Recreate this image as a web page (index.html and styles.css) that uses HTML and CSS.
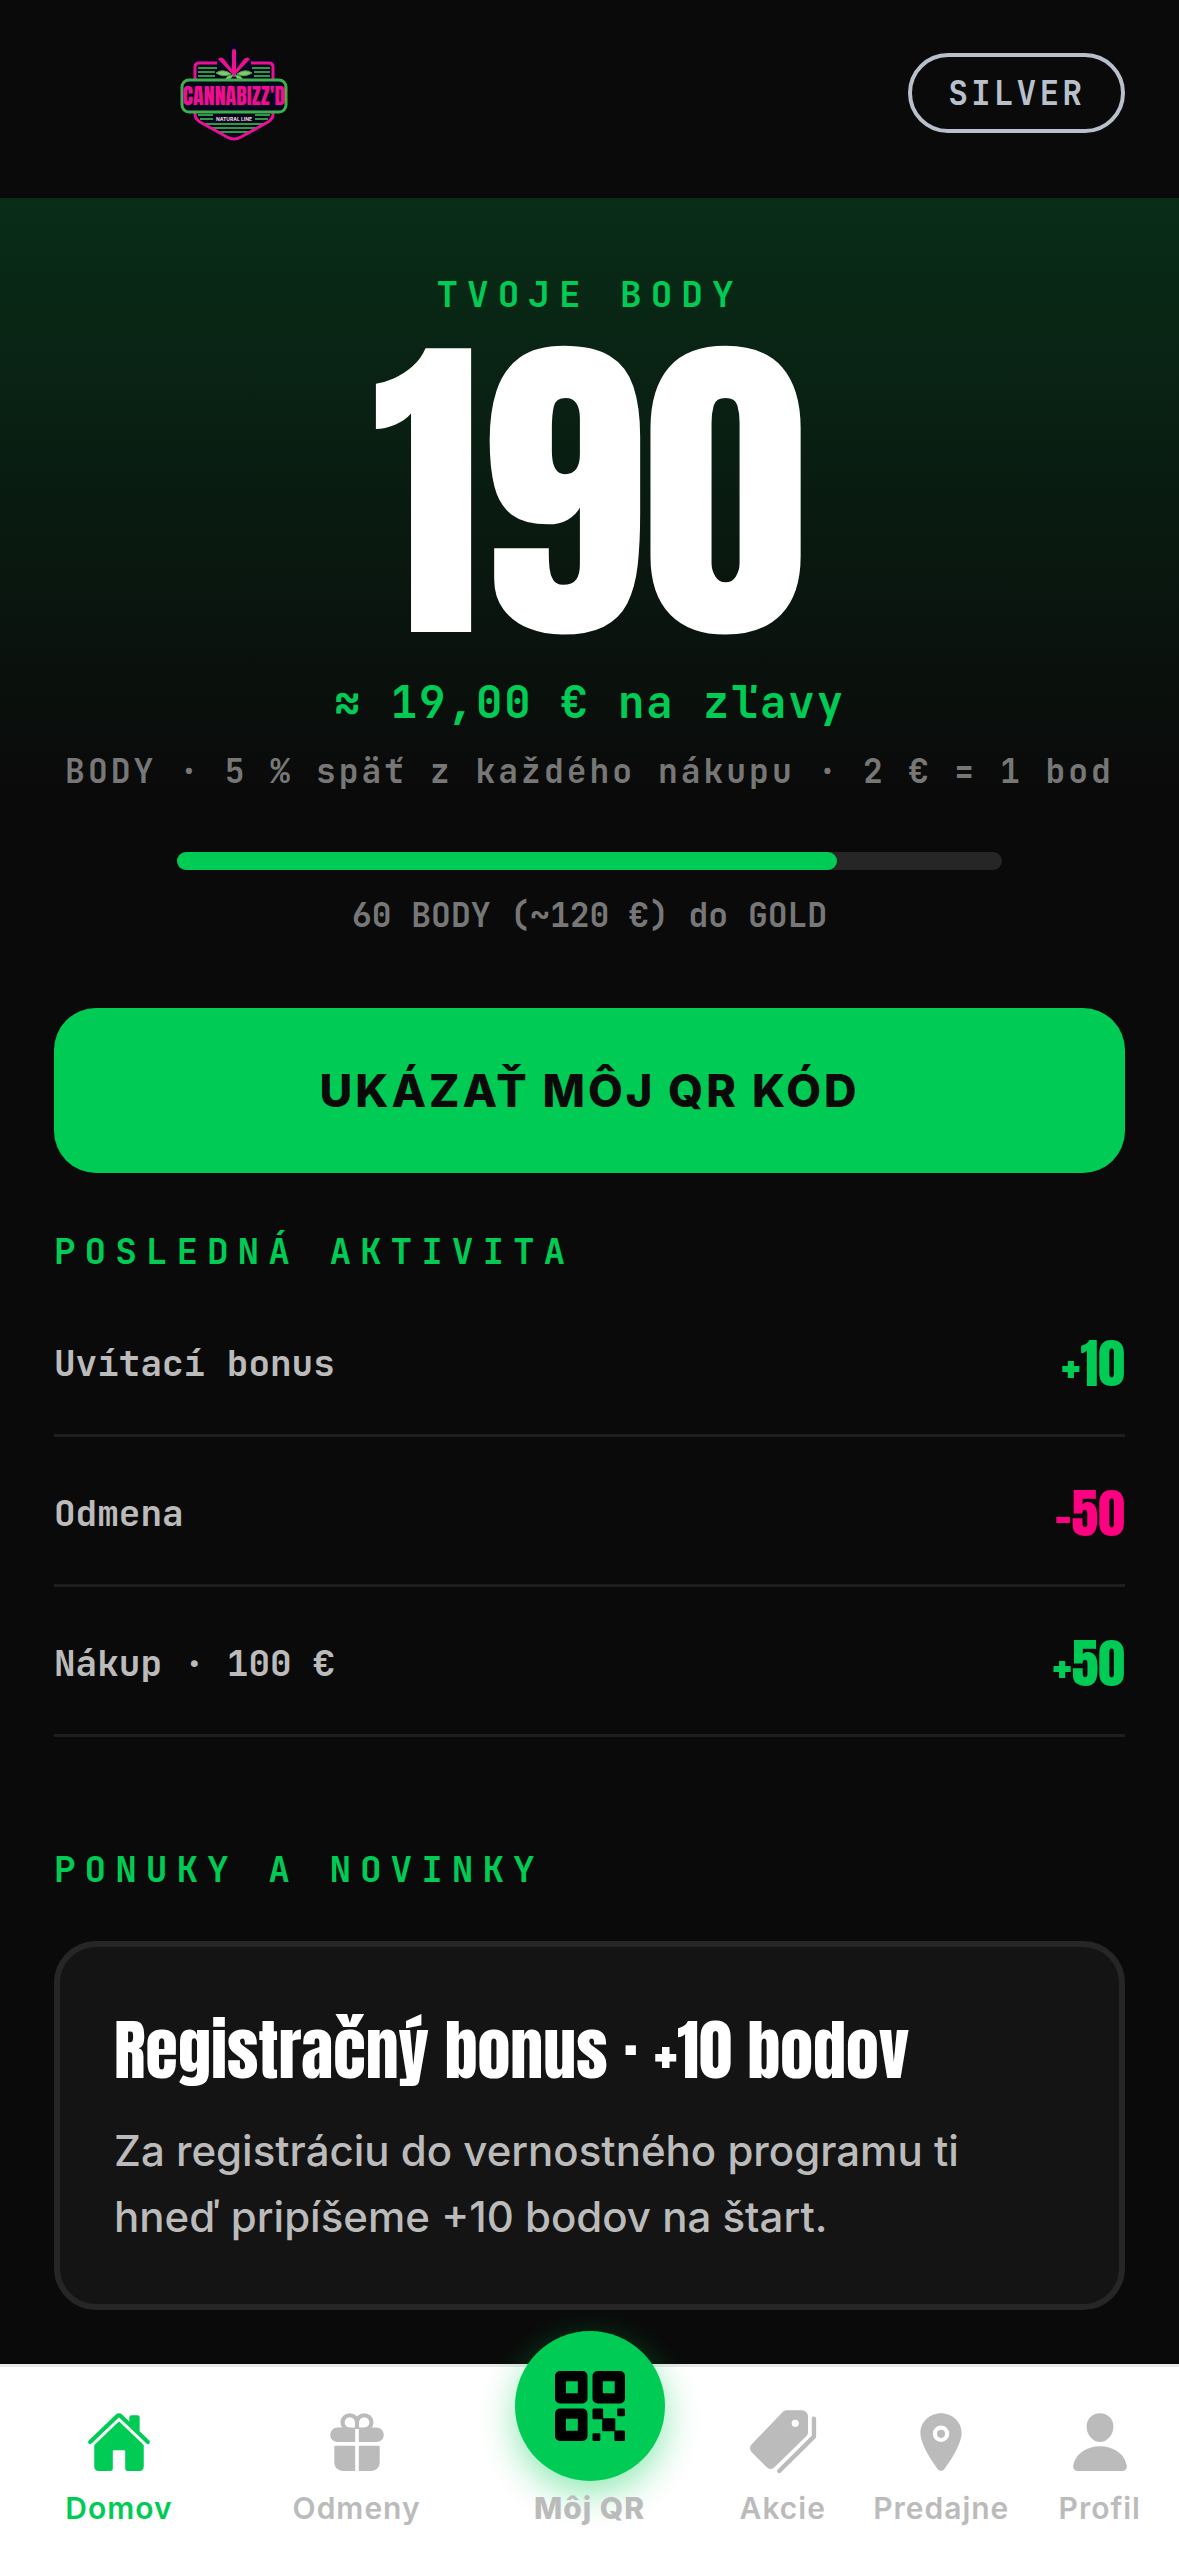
FILE: index.html
```html
<!DOCTYPE html>
<html lang="sk">
<head>
<meta charset="utf-8">
<meta name="viewport" content="width=device-width, initial-scale=1">
<title>Cannabizz'd – Domov</title>
<link rel="stylesheet" href="styles.css">
</head>
<body>
<header class="topbar">
  <div class="brand">
    <svg class="logo" viewBox="0 0 114 104" role="img" aria-label="Cannabizz'd Natural Line">
      <g fill="none" stroke="#06061c" stroke-width="7" stroke-linejoin="round">
        <path d="M18 31V27q0-4 4-4h70q4 0 4 4v46q0 5-5 8L64 96q-7 4-14 0L23 81q-5-3-5-8z" fill="#06061c"/>
        <path d="M57 35C52 24 53 14 57 6q5 10 0 29M57 35Q42 30 40 18M57 35q15-5 17-17"/>
      </g>
      <g fill="none" stroke="#2f9a46" stroke-width="2">
        <path d="M21 28h19M21 32h17M21 36h17M75 28h18M77 32h16M77 36h16"/>
        <path d="M21 75h15M23 79h13M25 84h64M33 88h48M40 92h34M78 75h15M78 79h13"/>
      </g>
      <path d="M18 40V27q0-4 4-4h18M74 23h18q4 0 4 4v13M18 72v2q0 5 5 8l27 15q7 4 14 0l27-15q5-3 5-8v-2" fill="none" stroke="#ec1090" stroke-width="3"/>
      <path d="M57 36L41 19q3-3 6 0l10 13 10-13q3-3 6 0z" fill="#ec1090"/>
      <path d="M57 35V11" stroke="#ec1090" stroke-width="4" stroke-linecap="round"/>
      <path d="M54 34q-8-6-15-1 8 5 15 1M60 34q8-6 15-1-8 5-15 1M56 35q-6 0-8 5 6 0 8-5M58 35q6 0 8 5-6 0-8-5" fill="#8dc26f" stroke="#3fae4b"/>
      <rect x="5" y="40" width="104" height="32" rx="7" fill="#06061c" stroke="#3fae4b" stroke-width="3"/>
      <text class="logo-name" x="57" y="65" text-anchor="middle">CANNABIZZ'D</text>
      <rect x="38" y="74" width="38" height="9" fill="#06061c"/>
      <text class="logo-line" x="57" y="81" text-anchor="middle">NATURAL LINE</text>
    </svg>
  </div>
  <span class="tier">SILVER</span>
</header>

<main class="content">
  <section class="hero">
    <h1 class="label">TVOJE BODY</h1>
    <p class="points">190</p>
    <p class="worth">≈ 19,00 € na zľavy</p>
    <p class="rate">BODY · 5 % späť z každého nákupu · 2 € = 1 bod</p>
    <div class="progress" role="progressbar" aria-valuenow="80" aria-valuemin="0" aria-valuemax="100" aria-labelledby="next-tier">
      <div class="progress-fill" style="width: 80%"></div>
    </div>
    <p class="next-tier" id="next-tier">60 BODY (~120 €) do GOLD</p>
  </section>

  <div class="sections">
    <button class="cta" type="button">UKÁZAŤ MÔJ QR KÓD</button>

    <section class="activity">
      <h2 class="label">POSLEDNÁ AKTIVITA</h2>
      <ul class="rows">
        <li class="row"><span>Uvítací bonus</span><span class="amount">+10</span></li>
        <li class="row"><span>Odmena</span><span class="amount amount-minus">-50</span></li>
        <li class="row"><span>Nákup · 100 €</span><span class="amount">+50</span></li>
      </ul>
    </section>

    <section class="news">
      <h2 class="label">PONUKY A NOVINKY</h2>
      <article class="card">
        <h3 class="card-title">Registračný bonus · +10 bodov</h3>
        <p class="card-text">Za registráciu do vernostného programu ti hneď pripíšeme +10 bodov na štart.</p>
      </article>
    </section>
  </div>
</main>

<nav class="tabbar" aria-label="Hlavná navigácia">
  <div class="tabs">
    <a class="tab tab-active" href="#domov" aria-current="page">
      <svg class="icon" viewBox="0 0 512 512" aria-hidden="true"><path d="M261.560 101.280a8 8 0 00-11.060 0L66.400 277.150a8 8 0 00-2.470 5.790L63.900 448a32 32 0 0032 32H192a16 16 0 0016-16V328a8 8 0 018-8h80a8 8 0 018 8v136a16 16 0 0016 16h96.060a32 32 0 0032-32V282.940a8 8 0 00-2.470-5.790z"/><path d="M490.910 244.150l-74.800-71.560V64a16 16 0 00-16-16h-48a16 16 0 00-16 16v32l-57.920-55.380C272.770 35.140 264.710 32 256 32c-8.680 0-16.720 3.140-22.140 8.630l-212.700 203.500c-6.220 6-7 15.870-1.340 22.370A16 16 0 0043 267.560L250.500 69.280a8 8 0 0111.060 0l207.520 198.280a16 16 0 0022.590-.44c6.140-6.360 5.630-16.860-.76-22.970z"/></svg>
      <span>Domov</span>
    </a>
    <a class="tab" href="#odmeny">
      <svg class="icon" viewBox="0 0 512 512" aria-hidden="true"><path d="M256 156v-52a56 56 0 10-56 56M256 104a56 56 0 1156 56" fill="none" stroke="currentColor" stroke-width="32"/><path d="M242 144v112H104a56 56 0 010-112zM270 144v112h138a56 56 0 000-112zM242 286v194H144a64 64 0 01-64-64V294q0-8 8-8zM270 286v194h98a64 64 0 0064-64V294q0-8-8-8z"/></svg>
      <span>Odmeny</span>
    </a>
  </div>
  <a class="tab tab-qr" href="#qr">
    <span class="fab">
      <svg class="icon-qr" viewBox="0 0 512 512" aria-hidden="true"><path fill-rule="evenodd" d="M64 32h144a32 32 0 0132 32v144a32 32 0 01-32 32H64a32 32 0 01-32-32V64a32 32 0 0132-32zm38 66v76h76V98zM304 32h144a32 32 0 0132 32v144a32 32 0 01-32 32H304a32 32 0 01-32-32V64a32 32 0 0132-32zm34 66v76h76V98zM64 272h144a32 32 0 0132 32v144a32 32 0 01-32 32H64a32 32 0 01-32-32V304a32 32 0 0132-32zm38 66v76h76v-76z"/><rect x="272" y="272" width="68" height="68" rx="8"/><rect x="334" y="334" width="84" height="84" rx="8"/><rect x="430" y="272" width="50" height="50" rx="8"/><rect x="272" y="430" width="50" height="50" rx="8"/><rect x="412" y="412" width="68" height="68" rx="8"/></svg>
    </span>
    <span>Môj QR</span>
  </a>
  <div class="tabs">
    <a class="tab" href="#akcie">
      <svg class="icon" viewBox="0 0 512 512" aria-hidden="true"><path fill-rule="evenodd" d="M288 10h115a47 47 0 0147 47v123c0 12-4 22-12 30L190 452a42 42 0 01-60 0L13 335a44 44 0 010-62L256 22c9-8 20-12 32-12zm63 73a28 28 0 100 56 28 28 0 100-56z"/><path d="M496 75v139L227 481" fill="none" stroke="currentColor" stroke-width="34" stroke-linecap="round" stroke-linejoin="round"/></svg>
      <span>Akcie</span>
    </a>
    <a class="tab" href="#predajne">
      <svg class="icon" viewBox="0 0 512 512" aria-hidden="true"><circle cx="256" cy="192" r="32"/><path d="M256 32c-88.220 0-160 68.650-160 153 0 40.170 18.310 93.590 54.420 158.780 29 52.340 62.550 99.670 80 123.220a31.750 31.750 0 0051.220 0c17.420-23.550 51-70.880 80-123.220C397.690 278.610 416 225.190 416 185c0-84.350-71.780-153-160-153zm0 224a64 64 0 1164-64 64.070 64.070 0 01-64 64z"/></svg>
      <span>Predajne</span>
    </a>
    <a class="tab" href="#profil">
      <svg class="icon" viewBox="0 0 512 512" aria-hidden="true"><path d="M332.640 64.580C313.180 43.570 286 32 256 32c-30.160 0-57.430 11.500-76.800 32.380-19.580 21.110-29.120 49.800-26.880 80.780C156.760 206.280 203.270 256 256 256s99.160-49.710 103.670-110.820c2.270-30.700-7.330-59.330-27.030-80.600zM432 480H80a31 31 0 01-24.200-11.130c-6.500-7.770-9.120-18.380-7.180-29.110C57.060 392.940 83.400 353.610 124.800 326c36.780-24.510 83.370-38 131.200-38s94.420 13.500 131.200 38c41.400 27.600 67.740 66.930 76.180 113.750 1.940 10.730-.68 21.340-7.180 29.110A31 31 0 01432 480z"/></svg>
      <span>Profil</span>
    </a>
  </div>
</nav>
</body>
</html>
```
FILE: styles.css
```css
:root {
  --green: #00cc55;
  --pink: #ff0080;
  --bg: #0a0a0a;
  --sans: Inter, "Liberation Sans", sans-serif;
  --mono: "JetBrains Mono", "DejaVu Sans Mono", monospace;
  --display: Anton, "Roboto Condensed", Inter, sans-serif;
}

* { box-sizing: border-box; }

body {
  margin: 0;
  min-height: 100vh;
  display: flex;
  flex-direction: column;
  background: var(--bg);
  color: #fff;
  font-family: var(--sans);
}

h1, h2, h3, p, ul { margin: 0; padding: 0; }

.topbar {
  display: flex;
  align-items: flex-start;
  justify-content: space-between;
  padding: 40px 54px 54px;
}

.brand { width: 360px; display: flex; justify-content: center; }
.logo { width: 114px; height: 104px; }
.logo-name { font: 400 22px var(--display); fill: #ec1090; }
.logo-line { font: 700 5px var(--sans); fill: #fbd9e6; }

.tier {
  margin-top: 13px;
  padding: 0 36px;
  border: 4px solid #b8c0cc;
  border-radius: 40px;
  color: #b8c0cc;
  font: 700 33px/72px var(--mono);
  letter-spacing: 3px;
}

.content { flex: 1; }

.hero {
  padding: 72px 54px 0;
  display: flex;
  flex-direction: column;
  align-items: center;
  text-align: center;
  background: linear-gradient(rgba(0, 204, 85, 0.18), rgba(0, 204, 85, 0) 80%);
}

.label {
  color: var(--green);
  font: 700 36px/48px var(--mono);
  letter-spacing: 9px;
}

.points { font: 400 330px/350px var(--display); }

.worth {
  margin-top: 4px;
  color: var(--green);
  font: 700 44px/60px var(--mono);
  letter-spacing: 2px;
}

.rate {
  margin-top: 15px;
  color: #777;
  font: 700 33px/48px var(--mono);
  letter-spacing: 3px;
}

.progress {
  width: 77%;
  height: 18px;
  margin-top: 57px;
  border-radius: 9px;
  background: #262626;
}

.progress-fill { height: 100%; border-radius: 9px; background: var(--green); }

.next-tier {
  margin-top: 21px;
  color: #777;
  font: 700 33px/48px var(--mono);
}

.sections { padding: 69px 54px 54px; }

.cta {
  display: block;
  width: 100%;
  padding: 54px;
  border: 0;
  border-radius: 42px;
  background: var(--green);
  color: var(--bg);
  font: 800 45px/57px var(--sans);
  letter-spacing: 3px;
}

.activity { margin-top: 54px; }

.rows { margin-top: 12px; list-style: none; }

.row {
  display: flex;
  align-items: center;
  justify-content: space-between;
  padding: 42px 0 36px;
  border-bottom: 3px solid #1e1e1e;
  color: #bbb;
  font: 700 36px/69px var(--mono);
}

.amount { color: var(--green); font: 400 54px/69px var(--display); }
.amount-minus { color: var(--pink); }

.news { margin-top: 108px; }

.card {
  margin-top: 48px;
  padding: 54px;
  border: 6px solid #262626;
  border-radius: 42px;
  background: #141414;
}

.card-title { font: 400 66px/99px var(--display); }

.card-text {
  margin-top: 18px;
  color: #bbb;
  font: 500 42px/66px var(--sans);
}

.tabbar {
  position: sticky;
  bottom: 0;
  display: flex;
  height: 192px;
  padding-bottom: 30px;
  border-top: 3px solid #e8e8e8;
  background: #fff;
}

.tabs { flex: 1; display: flex; }

.tab {
  flex: 1;
  display: flex;
  flex-direction: column;
  align-items: center;
  justify-content: flex-end;
  gap: 15px;
  color: #bbb;
  font: 600 30px/36px var(--sans);
  letter-spacing: 1px;
  text-decoration: none;
}

.tab-active { color: var(--green); }

.tab-qr { flex: none; width: 228px; gap: 9px; font-weight: 800; }

.icon { width: 66px; height: 66px; fill: currentColor; overflow: visible; }

.fab {
  display: flex;
  align-items: center;
  justify-content: center;
  flex: none;
  width: 150px;
  height: 150px;
  border-radius: 50%;
  background: var(--green);
  box-shadow: 0 12px 36px rgba(0, 204, 85, 0.45);
}

.icon-qr { width: 80px; height: 80px; fill: #000; }
```
